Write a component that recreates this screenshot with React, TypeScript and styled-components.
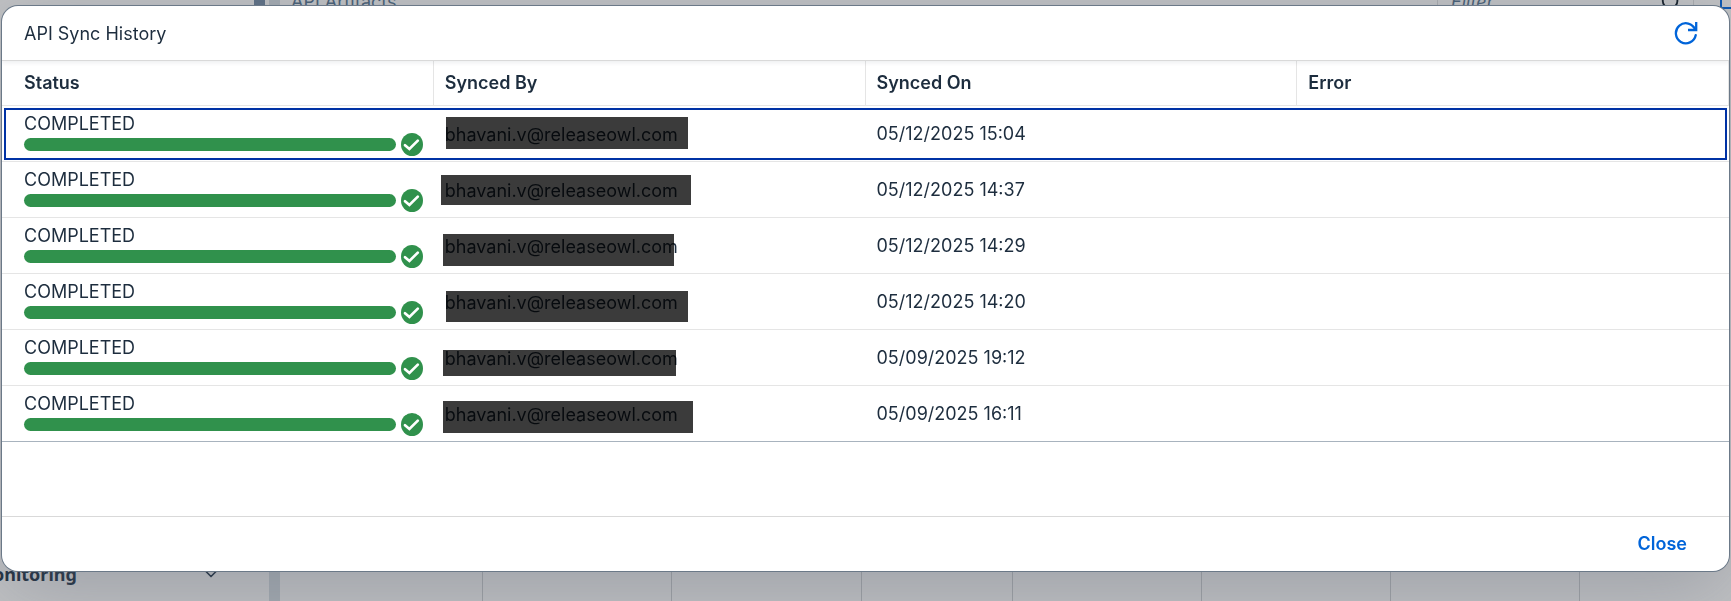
import React from "react";
import styled, { createGlobalStyle } from "styled-components";
import { ChevronDown, Search } from "lucide-react";

const GlobalStyle = createGlobalStyle`
  *, *::before, *::after { box-sizing: border-box; }
  body {
    margin: 0;
    overflow: hidden;
    background: #c1c2c4;
    color: #1d2d3e;
    font-family: Inter, "Noto Sans", sans-serif;
    font-size: 18px;
    line-height: 20px;
  }
`;

/* ---------- application behind the dialog ---------- */

const Viewport = styled.div`
  height: 100vh;
  overflow: hidden;
`;

const Shell = styled.div`
  display: flex;
  height: calc(100vh + 32px);
  margin: -32px 0 0 -24px;
`;

const Sidebar = styled.nav`
  display: flex;
  flex-direction: column;
  justify-content: space-between;
  flex: none;
  width: 293px;
`;

const ScrollThumb = styled.div`
  align-self: flex-end;
  width: 11px;
  height: 64px;
  margin-right: 4px;
  background: #5d6f84;
`;

const SidebarItem = styled.a`
  display: flex;
  align-items: center;
  justify-content: space-between;
  height: 54px;
  padding: 0 48px 0 0;
  color: #1d2d3e;
  font-family: "Noto Sans", sans-serif;
  font-weight: 700;
  text-decoration: none;
`;

const Splitter = styled.div`
  flex: none;
  width: 11px;
  background: #a4abb1;
`;

const Main = styled.main`
  display: flex;
  flex-direction: column;
  flex: 1;
`;

const Toolbar = styled.div`
  display: flex;
  align-items: center;
  flex: none;
  height: 68px;
  padding-left: 11px;
  color: #475e75;
`;

const FilterField = styled.label`
  display: flex;
  align-items: center;
  width: 257px;
  height: 36px;
  margin-left: auto;
  margin-right: 26px;
  padding: 0 11px;
  border: 1px solid #a9abae;
  color: #131e29;
`;

const FilterInput = styled.input`
  flex: 1;
  min-width: 0;
  border: 0;
  background: none;
  font: inherit;

  &::placeholder {
    color: #475e75;
    font-style: italic;
  }
`;

const ActionButton = styled.button`
  width: 11px;
  height: 14px;
  padding: 0;
  border: 2px solid #0a57b3;
  border-right: 0;
  background: none;
`;

const Grid = styled.div`
  display: grid;
  grid-template-columns: 203fr 189fr 190fr 151fr 189fr 189fr 189fr 151fr;
  flex: 1;
`;

const GridColumn = styled.div`
  border-right: 1px solid #9ea1a5;

  &:last-child { border-right: 0; }
`;

/* ---------- dialog ---------- */

const Backdrop = styled.div`
  position: fixed;
  inset: 0;
  padding: 6px 2px;
`;

const Dialog = styled.section`
  overflow: hidden;
  border-radius: 16px;
  background: #fff;
  box-shadow: 0 0 0 1px #6b7988, 0 20px 80px rgba(96, 106, 120, 0.38);
`;

const DialogHeader = styled.header`
  position: relative;
  display: flex;
  align-items: center;
  justify-content: space-between;
  height: 55px;
  padding: 0 31px 0 22px;
  border-bottom: 1px solid #d9d9d9;
  box-shadow: 0 2px 4px rgba(34, 53, 72, 0.08);
`;

const Title = styled.h1`
  margin: 0;
  padding-top: 2px;
  font-size: 18px;
  font-weight: 400;
`;

const IconButton = styled.button`
  display: flex;
  padding: 0;
  border: 0;
  background: none;
  color: #0064d9;
`;

const Table = styled.table`
  width: 100%;
  table-layout: fixed;
  border-spacing: 0;
  border-bottom: 1px solid #a8b3be;
`;

const HeadCell = styled.th`
  height: 45px;
  padding: 0 11px;
  border-right: 1px solid #e5e5e5;
  border-bottom: 1px solid #e5e5e5;
  font-weight: 600;
  text-align: left;

  &:first-child { padding-left: 22px; }
`;

const Row = styled.tr<{ $focused?: boolean }>`
  outline: ${(p) => (p.$focused ? "2px solid #0032a5" : "none")};
  outline-offset: -4px;

  &:last-child > td { border-bottom: 0; }
`;

const Cell = styled.td`
  padding: 7px 11px 6px;
  border-bottom: 1px solid #e5e5e5;
`;

const StatusCell = styled(Cell)`
  padding: 8px 11px 6px 22px;
`;

const Progress = styled.div`
  display: flex;
  align-items: center;
  gap: 5px;
  height: 21px;
`;

const ProgressBar = styled.div`
  flex: 1;
  height: 13px;
  border-radius: 7px;
  background: #30914c;
`;

interface Mask {
  x: number;
  y: number;
  w: number;
  h: number;
}

const Masked = styled.span<{ $mask: Mask }>`
  position: relative;
  display: inline-block;
  vertical-align: middle;
  white-space: nowrap;

  &::after {
    content: "";
    position: absolute;
    left: ${(p) => p.$mask.x}px;
    top: ${(p) => p.$mask.y}px;
    width: ${(p) => p.$mask.w}px;
    height: ${(p) => p.$mask.h}px;
    background: rgba(0, 0, 0, 0.77);
  }
`;

const DialogFooter = styled.footer`
  display: flex;
  align-items: center;
  justify-content: flex-end;
  height: 55px;
  margin-top: 74px;
  padding-right: 31px;
  border-top: 1px solid #d9d9d9;
`;

const TextButton = styled.button`
  padding: 6px 11px;
  border: 0;
  background: none;
  color: #0064d9;
  font: inherit;
  font-weight: 600;
`;

const RefreshIcon = () => (
  <svg width="24" height="24" viewBox="0 0 24 24" fill="none" stroke="currentColor" strokeWidth="2.3" aria-hidden="true">
    <path d="M21.7 14.2A10 10 0 1 1 21.2 8.6" strokeLinecap="round" />
    <path d="M22.2 1v8H14" />
  </svg>
);

const CheckIcon = () => (
  <svg width="22" height="23" viewBox="0 0 22 23" fill="none" role="img" aria-label="Success">
    <ellipse cx="11" cy="11.5" rx="11" ry="11.5" fill="#30914c" />
    <path d="M4 12.2L8.4 16L16.8 7.6" stroke="#fff" strokeWidth="2.7" strokeLinecap="round" />
  </svg>
);

const columns = ["Status", "Synced By", "Synced On", "Error"];

const user = "bhavani.v@releaseowl.com";

const entries: { syncedOn: string; mask: Mask }[] = [
  { syncedOn: "05/12/2025 15:04", mask: { x: 1, y: -8, w: 242, h: 32 } },
  { syncedOn: "05/12/2025 14:37", mask: { x: -4, y: -6, w: 250, h: 30 } },
  { syncedOn: "05/12/2025 14:29", mask: { x: -2, y: -3, w: 231, h: 32 } },
  { syncedOn: "05/12/2025 14:20", mask: { x: 1, y: -2, w: 242, h: 31 } },
  { syncedOn: "05/09/2025 19:12", mask: { x: -2, y: 1, w: 233, h: 26 } },
  { syncedOn: "05/09/2025 16:11", mask: { x: -2, y: -4, w: 250, h: 32 } },
];

export default function App() {
  return (
    <>
      <GlobalStyle />
      <Viewport>
        <Shell>
          <Sidebar>
            <ScrollThumb />
            <SidebarItem href="#monitoring">
              Monitoring
              <ChevronDown size={20} />
            </SidebarItem>
          </Sidebar>
          <Splitter />
          <Main>
            <Toolbar>
              API Artifacts
              <FilterField>
                <FilterInput placeholder="Filter" aria-label="Filter" />
                <Search size={22} />
              </FilterField>
              <ActionButton aria-label="Actions" />
            </Toolbar>
            <Grid>
              {Array.from({ length: 8 }, (_, i) => (
                <GridColumn key={i} />
              ))}
            </Grid>
          </Main>
        </Shell>
      </Viewport>
      <Backdrop>
        <Dialog role="dialog" aria-labelledby="dialog-title">
          <DialogHeader>
            <Title id="dialog-title">API Sync History</Title>
            <IconButton aria-label="Refresh">
              <RefreshIcon />
            </IconButton>
          </DialogHeader>
          <Table>
            <thead>
              <tr>
                {columns.map((c) => (
                  <HeadCell key={c} scope="col">{c}</HeadCell>
                ))}
              </tr>
            </thead>
            <tbody>
              {entries.map((e, i) => (
                <Row key={e.syncedOn} $focused={i === 0}>
                  <StatusCell>
                    COMPLETED
                    <Progress>
                      <ProgressBar />
                      <CheckIcon />
                    </Progress>
                  </StatusCell>
                  <Cell>
                    <Masked $mask={e.mask}>{user}</Masked>
                  </Cell>
                  <Cell>{e.syncedOn}</Cell>
                  <Cell />
                </Row>
              ))}
            </tbody>
          </Table>
          <DialogFooter>
            <TextButton>Close</TextButton>
          </DialogFooter>
        </Dialog>
      </Backdrop>
    </>
  );
}
